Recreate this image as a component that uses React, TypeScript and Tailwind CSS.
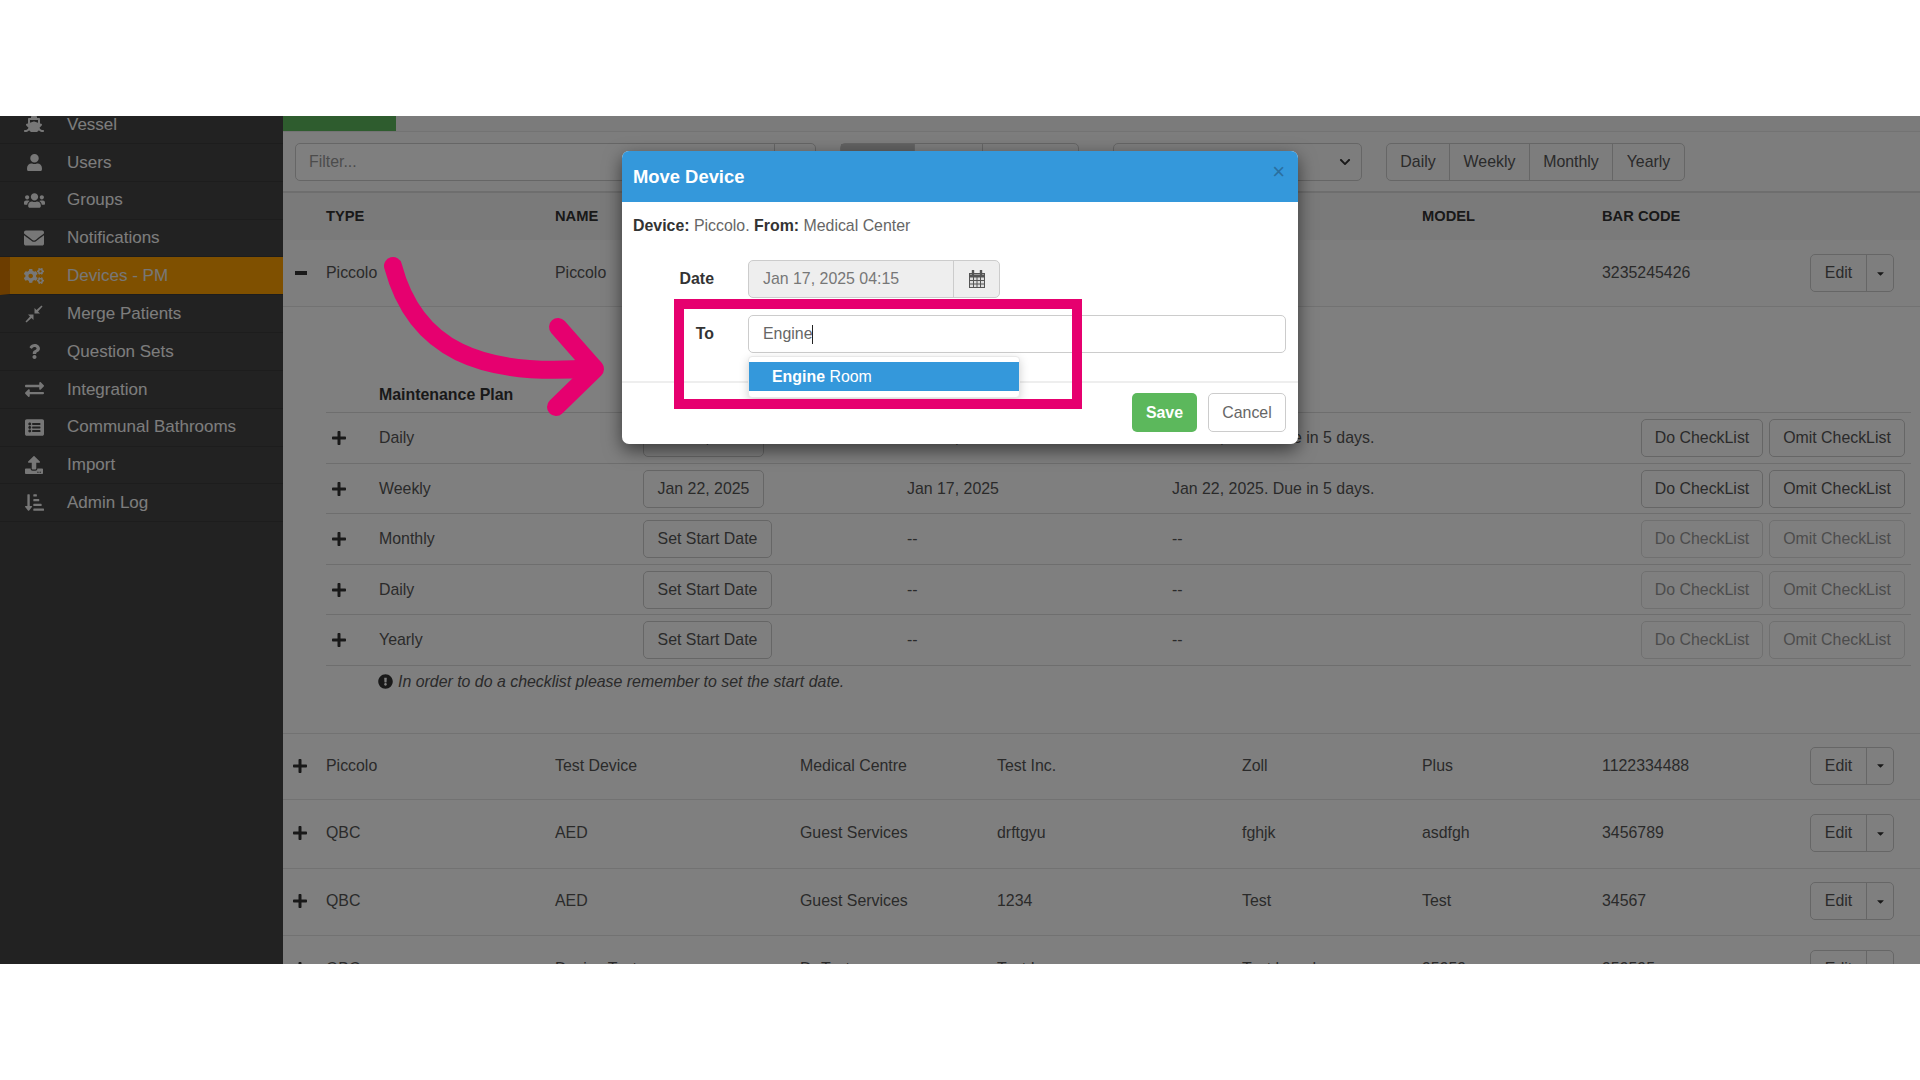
import React from 'react';
import {
  FaShip, FaUser, FaUsers, FaEnvelope, FaCogs, FaQuestion, FaExchangeAlt, FaListAlt,
  FaUpload, FaSortAmountDownAlt, FaPlus, FaExclamationCircle, FaCaretDown, FaChevronDown,
} from 'react-icons/fa';

const MergeIcon = ({ size = 18 }: { size?: number }) => (
  <svg width={size} height={size} viewBox="0 0 18 18" fill="currentColor">
    <path d="M1.5 17.5 L0.5 16.5 L5 11.5 L3 9.5 L8.5 9.5 L8.5 15 L6.5 13 Z" />
    <path d="M16.5 0.5 L17.5 1.5 L13 6.5 L15 8.5 L9.5 8.5 L9.5 3 L11.5 5 Z" />
  </svg>
);

const CalendarIcon = () => (
  <svg width="16" height="18" viewBox="0 0 16 18" fill="none" stroke="#555" strokeWidth="1">
    <rect x="0.5" y="3.5" width="15" height="14" fill="#ddd" />
    <path d="M0.5 6 H15.5" strokeWidth="3" />
    <path d="M0.5 10.5 H15.5 M0.5 14 H15.5 M4.5 7 V17.5 M8 7 V17.5 M11.5 7 V17.5" />
    <path d="M4 0.5 V4 M12 0.5 V4" strokeWidth="2.4" strokeLinecap="round" />
  </svg>
);

const NAV = [
  { label: 'Vessel', icon: <FaShip size={20} /> },
  { label: 'Users', icon: <FaUser size={17} /> },
  { label: 'Groups', icon: <FaUsers size={21} /> },
  { label: 'Notifications', icon: <FaEnvelope size={20} /> },
  { label: 'Devices - PM', icon: <FaCogs size={20} />, active: true },
  { label: 'Merge Patients', icon: <MergeIcon /> },
  { label: 'Question Sets', icon: <FaQuestion size={15} /> },
  { label: 'Integration', icon: <FaExchangeAlt size={19} /> },
  { label: 'Communal Bathrooms', icon: <FaListAlt size={19} /> },
  { label: 'Import', icon: <FaUpload size={18} /> },
  { label: 'Admin Log', icon: <FaSortAmountDownAlt size={19} /> },
];

const PLANS = [
  { name: 'Daily', start: 'Jan 22, 2025', last: 'Jan 17, 2025', next: 'Jan 22, 2025. Due in 5 days.', ready: true, h: 'h-[51px]' },
  { name: 'Weekly', start: 'Jan 22, 2025', last: 'Jan 17, 2025', next: 'Jan 22, 2025. Due in 5 days.', ready: true, h: 'h-[50px]' },
  { name: 'Monthly', start: 'Set Start Date', last: '--', next: '--', ready: false, h: 'h-[51px]' },
  { name: 'Daily', start: 'Set Start Date', last: '--', next: '--', ready: false, h: 'h-[50px]' },
  { name: 'Yearly', start: 'Set Start Date', last: '--', next: '--', ready: false, h: 'h-[51px]' },
];

const DEVICES = [
  { type: 'Piccolo', name: 'Test Device', loc: 'Medical Centre', maker: 'Test Inc.', brand: 'Zoll', model: 'Plus', code: '1122334488', h: 'h-[66px]' },
  { type: 'QBC', name: 'AED', loc: 'Guest Services', maker: 'drftgyu', brand: 'fghjk', model: 'asdfgh', code: '3456789', h: 'h-[69px]' },
  { type: 'QBC', name: 'AED', loc: 'Guest Services', maker: '1234', brand: 'Test', model: 'Test', code: '34567', h: 'h-[67px]' },
  { type: 'QBC', name: 'Device Test', loc: 'Dr Test', maker: 'Test Inc', brand: 'Test brand', model: '95959', code: '959595', h: 'h-[68px]' },
];

const ROW = 'grid grid-cols-[43px_229px_245px_197px_245px_180px_180px_208px_110px] items-center';

const EditButton = () => (
  <div className="flex h-[38px] w-[84px] rounded-[5px] border border-[#ccc]">
    <span className="flex w-[56px] items-center justify-center border-r border-[#ccc]">Edit</span>
    <span className="flex flex-1 items-center justify-center text-[#333]"><FaCaretDown size={11} /></span>
  </div>
);

const Button = ({ children, className = '' }: { children: React.ReactNode; className?: string }) => (
  <span className={`flex h-[38px] items-center justify-center rounded-[5px] border border-[#ccc] ${className}`}>
    {children}
  </span>
);

export default function App() {
  return (
    <div className="flex h-[1080px] w-[1920px] flex-col overflow-hidden bg-white text-[15.9px] text-[#555] font-['Liberation_Sans',Arial,sans-serif]">
      <div className="h-[116px] shrink-0 bg-white" />

      <div className="relative flex h-[848px] shrink-0 overflow-hidden bg-white">
        {/* Sidebar */}
        <aside className="w-[283px] shrink-0 bg-[#444] text-[17px]">
          <nav className="-mt-[10px] flex flex-col">
            {NAV.map(item => (
              <div
                key={item.label}
                className={`flex h-[37.85px] items-center border-b border-[#3b3b3b] ${item.active ? 'border-l-[10px] border-l-[#d97a00] bg-[#ffa000] text-[#eee]' : 'text-[#fafafa]'}`}
              >
                <span className={`flex w-[24px] justify-center text-[#eee] ${item.active ? 'ml-[12px]' : 'ml-[22px]'}`}>{item.icon}</span>
                <span className="ml-[21px]">{item.label}</span>
              </div>
            ))}
          </nav>
        </aside>

        {/* Main */}
        <main className="flex-1 overflow-hidden">
          <div className="h-[16px] border-b border-[#e6e6e6] bg-[#f7f7f7]">
            <div className="h-[15px] w-[113px] bg-[#5cb85c]" />
          </div>

          <div className="flex h-[61px] items-start border-b-2 border-[#ddd] bg-[#fafafa] pl-[12px] pt-[11px]">
            <div className="flex h-[38px] w-[521px] rounded-[5px] border border-[#ccc] bg-white">
              <span className="flex flex-1 items-center pl-[13px] text-[#999]">Filter...</span>
              <span className="w-[41px] border-l border-[#ccc]" />
            </div>
            <div className="ml-[24px] flex h-[38px] w-[239px] rounded-[5px] border border-[#ccc]">
              <span className="w-[73px] bg-[#c4c4c4]" />
              <span className="w-[69px] border-x border-[#ccc]" />
              <span className="flex-1" />
            </div>
            <div className="ml-[34px] flex h-[38px] w-[249px] items-center justify-end rounded-[5px] border border-[#ccc] pr-[10px] text-[#333]">
              <FaChevronDown size={12} />
            </div>
            <div className="ml-[24px] flex h-[38px] rounded-[5px] border border-[#ccc]">
              <span className="flex w-[63px] items-center justify-center border-r border-[#ccc]">Daily</span>
              <span className="flex w-[80px] items-center justify-center border-r border-[#ccc]">Weekly</span>
              <span className="flex w-[83px] items-center justify-center border-r border-[#ccc]">Monthly</span>
              <span className="flex w-[71px] items-center justify-center">Yearly</span>
            </div>
          </div>

          {/* Table head */}
          <div className={`${ROW} h-[47px] bg-[#f5f5f5] font-bold text-[14.7px] text-[#333]`}>
            <span />
            <span>TYPE</span>
            <span>NAME</span>
            <span />
            <span />
            <span />
            <span>MODEL</span>
            <span>BAR CODE</span>
            <span />
          </div>

          {/* Expanded device */}
          <div className={`${ROW} h-[67px] border-b border-[#e4e4e4] bg-[#fdfdfd]`}>
            <span className="pl-[12px]"><span className="block h-[4px] w-[12px] bg-[#333]" /></span>
            <span>Piccolo</span>
            <span>Piccolo</span>
            <span />
            <span />
            <span />
            <span />
            <span>3235245426</span>
            <EditButton />
          </div>

          <div className="h-[426px] pl-[43px] pr-[9px]">
            <div className="flex h-[106px] items-end border-b border-[#ddd] pb-[5px] pl-[53px] font-bold text-[#333]">Maintenance Plan</div>
            {PLANS.map((p, i) => (
              <div key={i} className={`flex items-center border-b border-[#ddd] ${p.h}`}>
                <span className="w-[53px] pl-[5px] text-[#333]"><FaPlus size={16} /></span>
                <span className="w-[264px]">{p.name}</span>
                <span className="w-[264px]">
                  <Button className={p.ready ? 'w-[121px]' : 'w-[129px]'}>{p.start}</Button>
                </span>
                <span className="w-[265px]">{p.last}</span>
                <span className="flex-1">{p.next}</span>
                <span className={`flex gap-[6px] ${p.ready ? '' : 'opacity-60'}`}>
                  <Button className="w-[122px]">Do CheckList</Button>
                  <Button className="w-[136px] mr-[6px]">Omit CheckList</Button>
                </span>
              </div>
            ))}
            <div className="mt-[4px] flex items-center pl-[52px] italic">
              <FaExclamationCircle size={15} className="mr-[5px] text-[#333]" />
              In order to do a checklist please remember to set the start date.
            </div>
          </div>

          {/* Other devices */}
          {DEVICES.map((d, i) => (
            <div key={i} className={`${ROW} ${d.h} border-t border-[#e4e4e4] pb-[2px]`}>
              <span className="pl-[9px] text-[#333]"><FaPlus size={16} /></span>
              <span>{d.type}</span>
              <span>{d.name}</span>
              <span>{d.loc}</span>
              <span>{d.maker}</span>
              <span>{d.brand}</span>
              <span>{d.model}</span>
              <span>{d.code}</span>
              <EditButton />
            </div>
          ))}
        </main>

        {/* Backdrop */}
        <div className="absolute inset-0 bg-black/50" />

        {/* Move Device modal */}
        <div className="absolute left-[622px] top-[35px] h-[293px] w-[676px] rounded-[7px] bg-white text-[#666] shadow-[0_6px_18px_rgba(0,0,0,0.55)]">
          <div className="flex h-[51px] items-center justify-between rounded-t-[7px] bg-[#3498db] pl-[11px] pr-[13px]">
            <span className="text-[18.4px] font-bold text-white">Move Device</span>
            <span className="-mt-[10px] text-[22px] leading-none text-[#2a6f9f]">×</span>
          </div>
          <div className="pl-[11px] pt-[12px] leading-[24px]">
            <b className="text-[#333]">Device:</b> Piccolo. <b className="text-[#333]">From:</b> Medical Center
          </div>
          <div className="mt-[22px] flex h-[38px] items-center">
            <span className="w-[126px] pr-[34px] text-right font-bold text-[#333]">Date</span>
            <div className="flex h-[38px] w-[252px] rounded-[5px] border border-[#ccc] bg-[#eee]">
              <span className="flex w-[205px] items-center border-r border-[#ccc] pl-[14px] text-[#777]">Jan 17, 2025 04:15</span>
              <span className="flex flex-1 items-center justify-center"><CalendarIcon /></span>
            </div>
          </div>
          <div className="mt-[17px] flex h-[38px] items-center">
            <span className="w-[126px] pr-[34px] text-right font-bold text-[#333]">To</span>
            <div className="flex h-[38px] w-[538px] items-center rounded-[5px] border border-[#ccc] pl-[14px]">
              Engine<span className="h-[19px] w-px bg-[#222]" />
            </div>
          </div>
          <div className="mt-[28px] flex h-[63px] justify-end gap-[11px] border-t-2 border-[#eee] pr-[12px] pt-[10px]">
            <span className="flex h-[39px] w-[65px] items-center justify-center rounded-[5px] bg-[#5cb85c] font-bold text-white">Save</span>
            <span className="flex h-[39px] w-[78px] items-center justify-center rounded-[5px] border border-[#ccc]">Cancel</span>
          </div>

          {/* Typeahead menu */}
          <div className="absolute left-[126px] top-[205px] h-[42px] w-[272px] rounded-[4px] border border-[#e8e8e8] bg-white py-[5px] shadow-[0_3px_10px_rgba(0,0,0,0.18)]">
            <div className="flex h-[29px] items-center bg-[#3498db] pl-[23px] text-white">
              <b>Engine</b>&nbsp;Room
            </div>
          </div>
        </div>

        {/* Annotation */}
        <div className="absolute left-[674px] top-[183px] h-[110px] w-[408px] border-[10px] border-[#e6006f]" />
        <svg className="absolute left-[370px] top-[130px]" width="250" height="180" viewBox="0 0 250 180" fill="none" stroke="#e6006f" strokeWidth="18" strokeLinecap="round" strokeLinejoin="round">
          <path d="M23 20 C 45 103, 110 132, 224 122" />
          <path d="M188 81 L 225 123 L 186 161" />
        </svg>
      </div>

      <div className="flex-1 bg-white" />
    </div>
  );
}
